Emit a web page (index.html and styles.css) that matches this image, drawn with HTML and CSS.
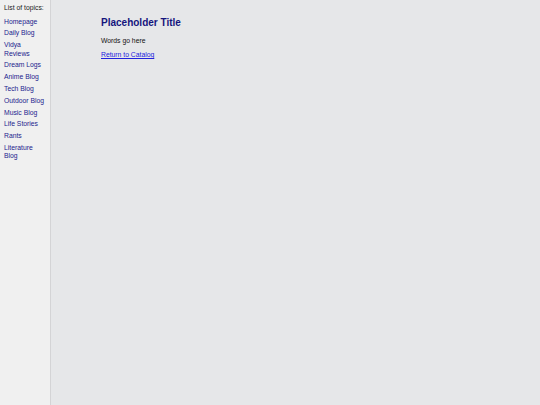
FILE: index.html
```html
<!DOCTYPE html>
<html>
<head>
<meta charset="utf-8">
<link rel="stylesheet" href="styles.css">
</head>
<body>
<div class="layout">
  <nav class="sidebar">
    <div class="heading">List of topics:</div>
    <ul class="topics">
      <li><a href="#">Homepage</a></li>
      <li><a href="#">Daily Blog</a></li>
      <li><a href="#">Vidya Reviews</a></li>
      <li><a href="#">Dream Logs</a></li>
      <li><a href="#">Anime Blog</a></li>
      <li><a href="#">Tech Blog</a></li>
      <li><a href="#">Outdoor Blog</a></li>
      <li><a href="#">Music Blog</a></li>
      <li><a href="#">Life Stories</a></li>
      <li><a href="#">Rants</a></li>
      <li><a href="#">Literature Blog</a></li>
    </ul>
  </nav>
  <main class="content">
    <h1 class="title">Placeholder Title</h1>
    <p class="text">Words go here</p>
    <p class="text"><a class="back" href="#">Return to Catalog</a></p>
  </main>
</div>
</body>
</html>
```
FILE: styles.css
```css
html, body {
  margin: 0;
  padding: 0;
  height: 100%;
}
body {
  font-family: "Liberation Sans", Arial, sans-serif;
  background: #e6e7e9;
  color: #111;
}
.layout {
  display: flex;
  min-height: 100%;
}
.sidebar {
  width: 44px;
  flex: none;
  background: #f0f0f0;
  border-right: 1px solid #d4d4d6;
  padding: 4px 2px 0 4px;
  font-size: 6.8px;
  line-height: 8.5px;
}
.heading {
  color: #222;
  margin-bottom: 5px;
}
.topics {
  list-style: none;
  margin: 0;
  padding: 0;
  display: flex;
  flex-direction: column;
  gap: 3.3px;
}
.topics a {
  color: #1c1c8e;
  text-decoration: none;
}
.content {
  flex: 1;
  padding: 16px 0 0 50px;
}
.title {
  font-size: 10px;
  font-weight: bold;
  color: #15157d;
  margin: 0 0 7px 0;
  line-height: 13px;
}
.text {
  font-size: 6.8px;
  line-height: 9px;
  margin: 0 0 5px 0;
}
.back {
  color: #2222dd;
  text-decoration: underline;
}
```
